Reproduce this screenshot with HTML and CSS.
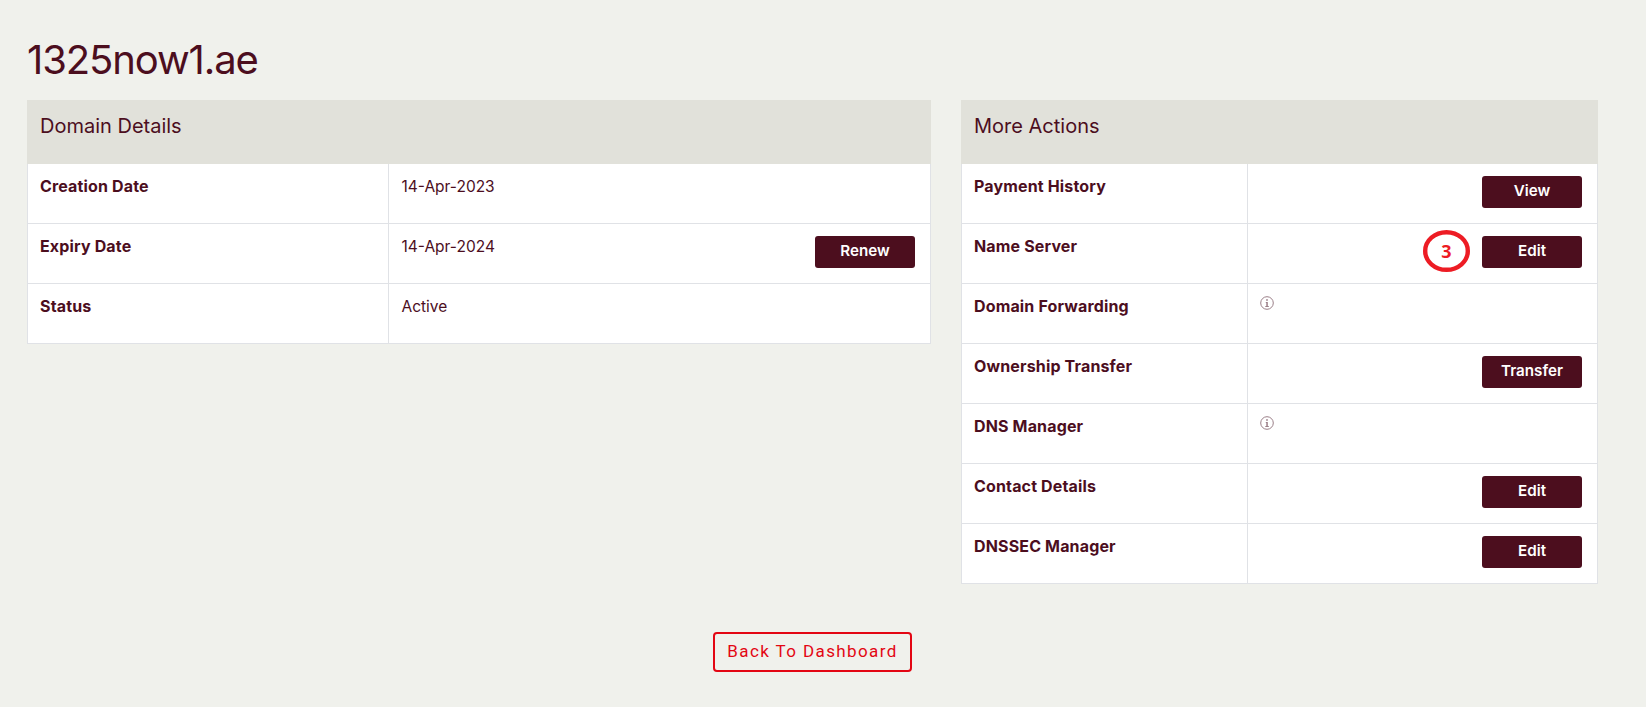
FILE: index.html
```html
<!DOCTYPE html>
<html lang="en">
<head>
<meta charset="utf-8">
<title>1325now1.ae</title>
<link rel="stylesheet" href="styles.css">
</head>
<body>
<main class="page">
  <h1 class="title">1325now1.ae</h1>
  <div class="columns">
    <section class="panel panel-left">
      <h2 class="panel-head">Domain Details</h2>
      <div class="row row-left">
        <div class="cell label">Creation Date</div>
        <div class="cell value">14-Apr-2023</div>
      </div>
      <div class="row row-left">
        <div class="cell label">Expiry Date</div>
        <div class="cell value split">14-Apr-2024 <a class="btn">Renew</a></div>
      </div>
      <div class="row row-left">
        <div class="cell label">Status</div>
        <div class="cell value">Active</div>
      </div>
    </section>
    <section class="panel panel-right">
      <h2 class="panel-head">More Actions</h2>
      <div class="row row-right">
        <div class="cell label">Payment History</div>
        <div class="cell action"><a class="btn">View</a></div>
      </div>
      <div class="row row-right">
        <div class="cell label">Name Server</div>
        <div class="cell action">
          <span class="callout">
            <svg class="callout-ring" width="47" height="42" viewBox="0 0 47 42"><ellipse cx="23.5" cy="21" rx="21.3" ry="18.8" fill="none" stroke="#ed1c24" stroke-width="4.4"/></svg>
            <span class="callout-num">3</span>
          </span>
          <a class="btn">Edit</a>
        </div>
      </div>
      <div class="row row-right">
        <div class="cell label">Domain Forwarding</div>
        <div class="cell info-cell">
          <svg class="info" width="14" height="14" viewBox="0 0 14 14"><circle cx="7" cy="7" r="6.3" fill="none" stroke="#9b7f88" stroke-width="1"/><rect x="6.2" y="3.2" width="1.6" height="1.6" fill="#9b7f88"/><path d="M5.8 6h2v4h1v1H5.3v-1h1V7h-.5z" fill="#9b7f88"/></svg>
        </div>
      </div>
      <div class="row row-right">
        <div class="cell label">Ownership Transfer</div>
        <div class="cell action"><a class="btn">Transfer</a></div>
      </div>
      <div class="row row-right">
        <div class="cell label">DNS Manager</div>
        <div class="cell info-cell">
          <svg class="info" width="14" height="14" viewBox="0 0 14 14"><circle cx="7" cy="7" r="6.3" fill="none" stroke="#9b7f88" stroke-width="1"/><rect x="6.2" y="3.2" width="1.6" height="1.6" fill="#9b7f88"/><path d="M5.8 6h2v4h1v1H5.3v-1h1V7h-.5z" fill="#9b7f88"/></svg>
        </div>
      </div>
      <div class="row row-right">
        <div class="cell label">Contact Details</div>
        <div class="cell action"><a class="btn">Edit</a></div>
      </div>
      <div class="row row-right">
        <div class="cell label">DNSSEC Manager</div>
        <div class="cell action"><a class="btn">Edit</a></div>
      </div>
    </section>
  </div>
  <div class="footer"><a class="back">Back To Dashboard</a></div>
</main>
</body>
</html>
```
FILE: styles.css
```css
* { box-sizing: border-box; }
html, body { margin: 0; height: 100%; }
body {
  background: #f0f1ec;
  color: #4c0e1e;
  font-family: Inter, "Liberation Sans", sans-serif;
  font-size: 16px;
  overflow: hidden;
}
.page { width: 1571px; margin-left: 27px; padding-top: 36px; }
.title {
  margin: 0 0 16px;
  font-size: 40px;
  line-height: 48px;
  font-weight: 400;
  letter-spacing: -1.1px;
}
.columns { display: flex; justify-content: space-between; align-items: flex-start; }
.panel { border: 1px solid #e0e2e6; border-top: 0; background: #fff; }
.panel-left { width: 904px; }
.panel-right { width: 637px; }
.panel-head {
  margin: 0 -1px;
  height: 64px;
  padding: 13px 13px;
  background: #e1e1da;
  font-size: 20px;
  line-height: 26px;
  font-weight: 400;
}
.row { display: grid; height: 60px; border-bottom: 1px solid #e0e2e6; }
.row:last-child { height: 59px; border-bottom: 0; }
.row-left { grid-template-columns: 361px 1fr; }
.row-right { grid-template-columns: 286px 1fr; }
.cell { padding: 11px 15px 0 12px; line-height: 22px; font-size: 15.5px; }
.label { border-right: 1px solid #e0e2e6; font-weight: 700; font-size: 16px; letter-spacing: 0.15px; }
.value { padding-left: 12.5px; padding-top: 12px; }
.split { display: flex; justify-content: space-between; align-items: flex-start; }
.action { display: flex; justify-content: flex-end; align-items: flex-start; position: relative; padding-top: 12px; }
.info-cell { padding-left: 12px; padding-top: 12px; }
.info { display: block; }
.btn {
  display: flex;
  align-items: center;
  justify-content: center;
  width: 100px;
  height: 32px;
  padding-bottom: 2px;
  background: #4c0e1e;
  color: #fff;
  border-radius: 3px;
  font-size: 15.2px;
  font-weight: 600;
}
.callout {
  position: absolute;
  left: 175px;
  top: 6px;
  width: 47px;
  height: 42px;
  display: flex;
  align-items: center;
  justify-content: center;
}
.callout-ring { position: absolute; left: 0; top: 0; }
.callout-num {
  font-family: "Open Sans", sans-serif;
  font-weight: 700;
  font-size: 18px;
  line-height: 1;
  color: #ed1c24;
}
.footer { display: flex; justify-content: center; margin-top: 48px; }
.back {
  display: flex;
  align-items: center;
  justify-content: center;
  width: 199px;
  height: 40px;
  padding-bottom: 2px;
  border: 2px solid #e30613;
  border-radius: 4px;
  color: #e30613;
  font-family: Roboto, sans-serif;
  font-size: 17px;
  letter-spacing: 1.4px;
}
```
